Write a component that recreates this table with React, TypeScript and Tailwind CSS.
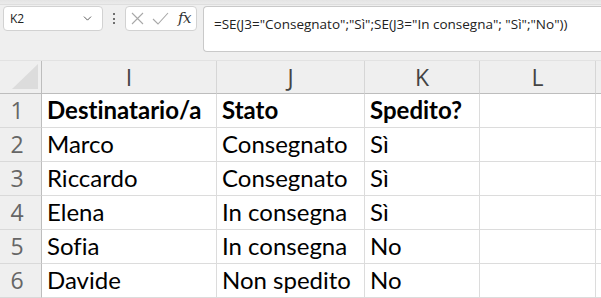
import { ChevronDown } from "lucide-react";

const cols = ["I", "J", "K", "L", ""];

const rows: string[][] = [
  ["Destinatario/a", "Stato", "Spedito?", "", ""],
  ["Marco", "Consegnato", "Sì", "", ""],
  ["Riccardo", "Consegnato", "Sì", "", ""],
  ["Elena", "In consegna", "Sì", "", ""],
  ["Sofia", "In consegna", "No", "", ""],
  ["Davide", "Non spedito", "No", "", ""],
];

const uiFont = "font-['Open_Sans','Noto_Sans',sans-serif]";
const cellFont = "font-['Lato','Noto_Sans',sans-serif] [font-variant-ligatures:none]";

export default function App() {
  return (
    <div className="w-[601px] h-[298px] overflow-hidden bg-[#efefef] flex flex-col">
      {/* ribbon shadow */}
      <div className="h-[5px] bg-gradient-to-b from-[#e4e4e4] to-[#ebebeb] border-b border-[#dedede]" />

      {/* name box + formula bar */}
      <div className="h-[55px] flex items-start pl-[3px]">
        <div className="mt-[1px] w-[100px] h-[25px] bg-white border border-[#d2d2d2] rounded-[4px] flex items-center justify-between pl-[6px] pr-[8px]">
          <span className={`${uiFont} text-[12px] text-[#222]`}>K2</span>
          <ChevronDown className="w-[13px] h-[13px] text-[#444]" strokeWidth={1.6} />
        </div>
        <div className="w-[22px] h-[27px] flex flex-col items-center justify-center gap-[2.5px]">
          <span className="w-[2px] h-[2px] bg-[#444] rounded-full" />
          <span className="w-[2px] h-[2px] bg-[#444] rounded-full" />
          <span className="w-[2px] h-[2px] bg-[#444] rounded-full" />
        </div>
        <div className="mt-[1px] w-[72px] h-[25px] bg-white border border-[#d2d2d2] rounded-[4px] flex items-center pl-[5px] gap-[8px]">
          <svg width="13" height="13" viewBox="0 0 13 13" className="shrink-0">
            <path d="M1 1 L12 12 M12 1 L1 12" stroke="#a8a8a8" strokeWidth="1.1" fill="none" />
          </svg>
          <svg width="17" height="13" viewBox="0 0 17 13" className="shrink-0">
            <path d="M1 7 L6 12 L16 1" stroke="#a8a8a8" strokeWidth="1.1" fill="none" />
          </svg>
          <span className="font-['DejaVu_Serif','Liberation_Serif',serif] italic text-[15px] leading-none text-[#333] ml-[1px] tracking-[-0.5px]">
            fx
          </span>
        </div>
        <div className="ml-[6px] mt-[1px] flex-1 h-[46px] bg-white border border-r-0 border-[#c9c9c9] rounded-l-[4px] pl-[10px] pt-[4px]">
          <span className={`${uiFont} text-[13.5px] text-[#222] whitespace-nowrap`}>
            =SE(J3="Consegnato";"Sì";SE(J3="In consegna"; "Sì";"No"))
          </span>
        </div>
      </div>

      {/* sheet grid */}
      <div className="grid grid-cols-[42px_175px_148px_115px_116px_1fr] grid-rows-[33px_repeat(6,34px)] border-t border-[#e2e2e2]">
        <div className="bg-[#efefef] border-r border-b border-[#bdbdbd] relative">
          <svg width="42" height="32" viewBox="0 0 42 32" className="absolute inset-0">
            <polygon points="12,28 38,3 38,28" fill="#dcdcdc" />
          </svg>
        </div>
        {cols.map((c, i) => (
          <div
            key={"h" + i}
            className={`bg-[#efefef] border-b border-[#bdbdbd] ${i < cols.length - 1 ? "border-r border-r-[#d6d6d6]" : ""} flex items-center justify-center ${uiFont} text-[23px] text-[#444] leading-none`}
          >
            {c}
          </div>
        ))}
        {rows.map((r, ri) => (
          <div key={"r" + ri} className="contents">
            <div
              className={`bg-[#efefef] border-r border-[#bdbdbd] border-b border-b-[#d9d9d9] flex items-center justify-center pr-[7px] ${uiFont} text-[23px] text-[#666] leading-none`}
            >
              {ri + 1}
            </div>
            {r.map((v, ci) => (
              <div
                key={ci}
                className={`bg-white border-b border-[#dcdcdc] ${ci < r.length - 1 ? "border-r" : ""} flex items-end pl-[5px] pb-[3px] ${cellFont} text-[24px] leading-[28px] text-black whitespace-nowrap overflow-visible ${ri === 0 ? "font-bold" : ""}`}
              >
                {v}
              </div>
            ))}
          </div>
        ))}
      </div>
    </div>
  );
}
